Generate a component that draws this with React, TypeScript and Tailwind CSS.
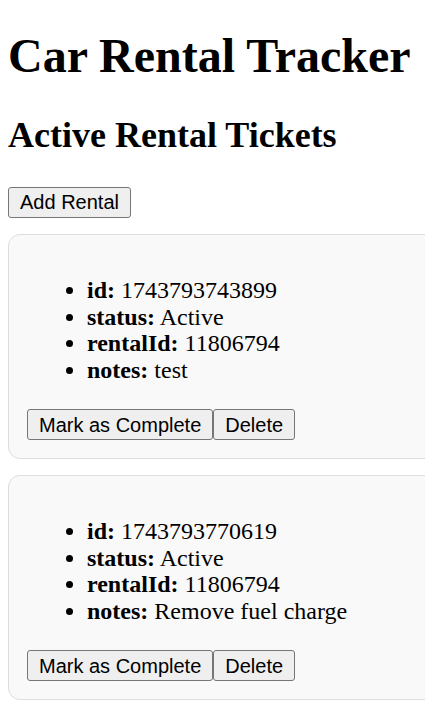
import React from 'react';

type Ticket = {
    id: string;
    status: string;
    rentalId: string;
    notes: string;
};

const tickets: Ticket[] = [
    { id: '1743793743899', status: 'Active', rentalId: '11806794', notes: 'test' },
    { id: '1743793770619', status: 'Active', rentalId: '11806794', notes: 'Remove fuel charge' },
];

const btn =
    "h-[31px] px-[11px] border border-[#767676] rounded-[3px] bg-[#efefef] text-[20px] leading-none text-black font-['Liberation_Sans',Arial,sans-serif]";

const TicketCard = ({ ticket }: { ticket: Ticket }) => {
    const fields: [string, string][] = [
        ['id', ticket.id],
        ['status', ticket.status],
        ['rentalId', ticket.rentalId],
        ['notes', ticket.notes],
    ];

    return (
        <div className="w-[560px] bg-[#f9f9f9] border border-[#dddddd] rounded-[12px] p-[18px]">
            <ul className="list-disc pl-[60px] mt-[24px] mb-[26px]">
                {fields.map(([label, value]) => (
                    <li key={label}>
                        <strong className="font-bold">{label}:</strong> {value}
                    </li>
                ))}
            </ul>
            <div className="flex">
                <button className={btn}>Mark as Complete</button>
                <button className={btn}>Delete</button>
            </div>
        </div>
    );
};

const App = () => {
    return (
        <div className="w-[425px] h-[706px] overflow-hidden bg-white text-black px-[8px] text-[24px] leading-[1.107] font-['Liberation_Serif','Times_New_Roman',serif]">
            <h1 className="text-[48px] font-bold mt-[29px] mb-[34px]">Car Rental Tracker</h1>
            <h2 className="text-[36px] font-bold mb-[31px]">Active Rental Tickets</h2>
            <button className={btn}>Add Rental</button>
            <div className="mt-[16px] flex flex-col gap-[16px]">
                {tickets.map((t) => (
                    <TicketCard key={t.id} ticket={t} />
                ))}
            </div>
        </div>
    );
};

export default App;
